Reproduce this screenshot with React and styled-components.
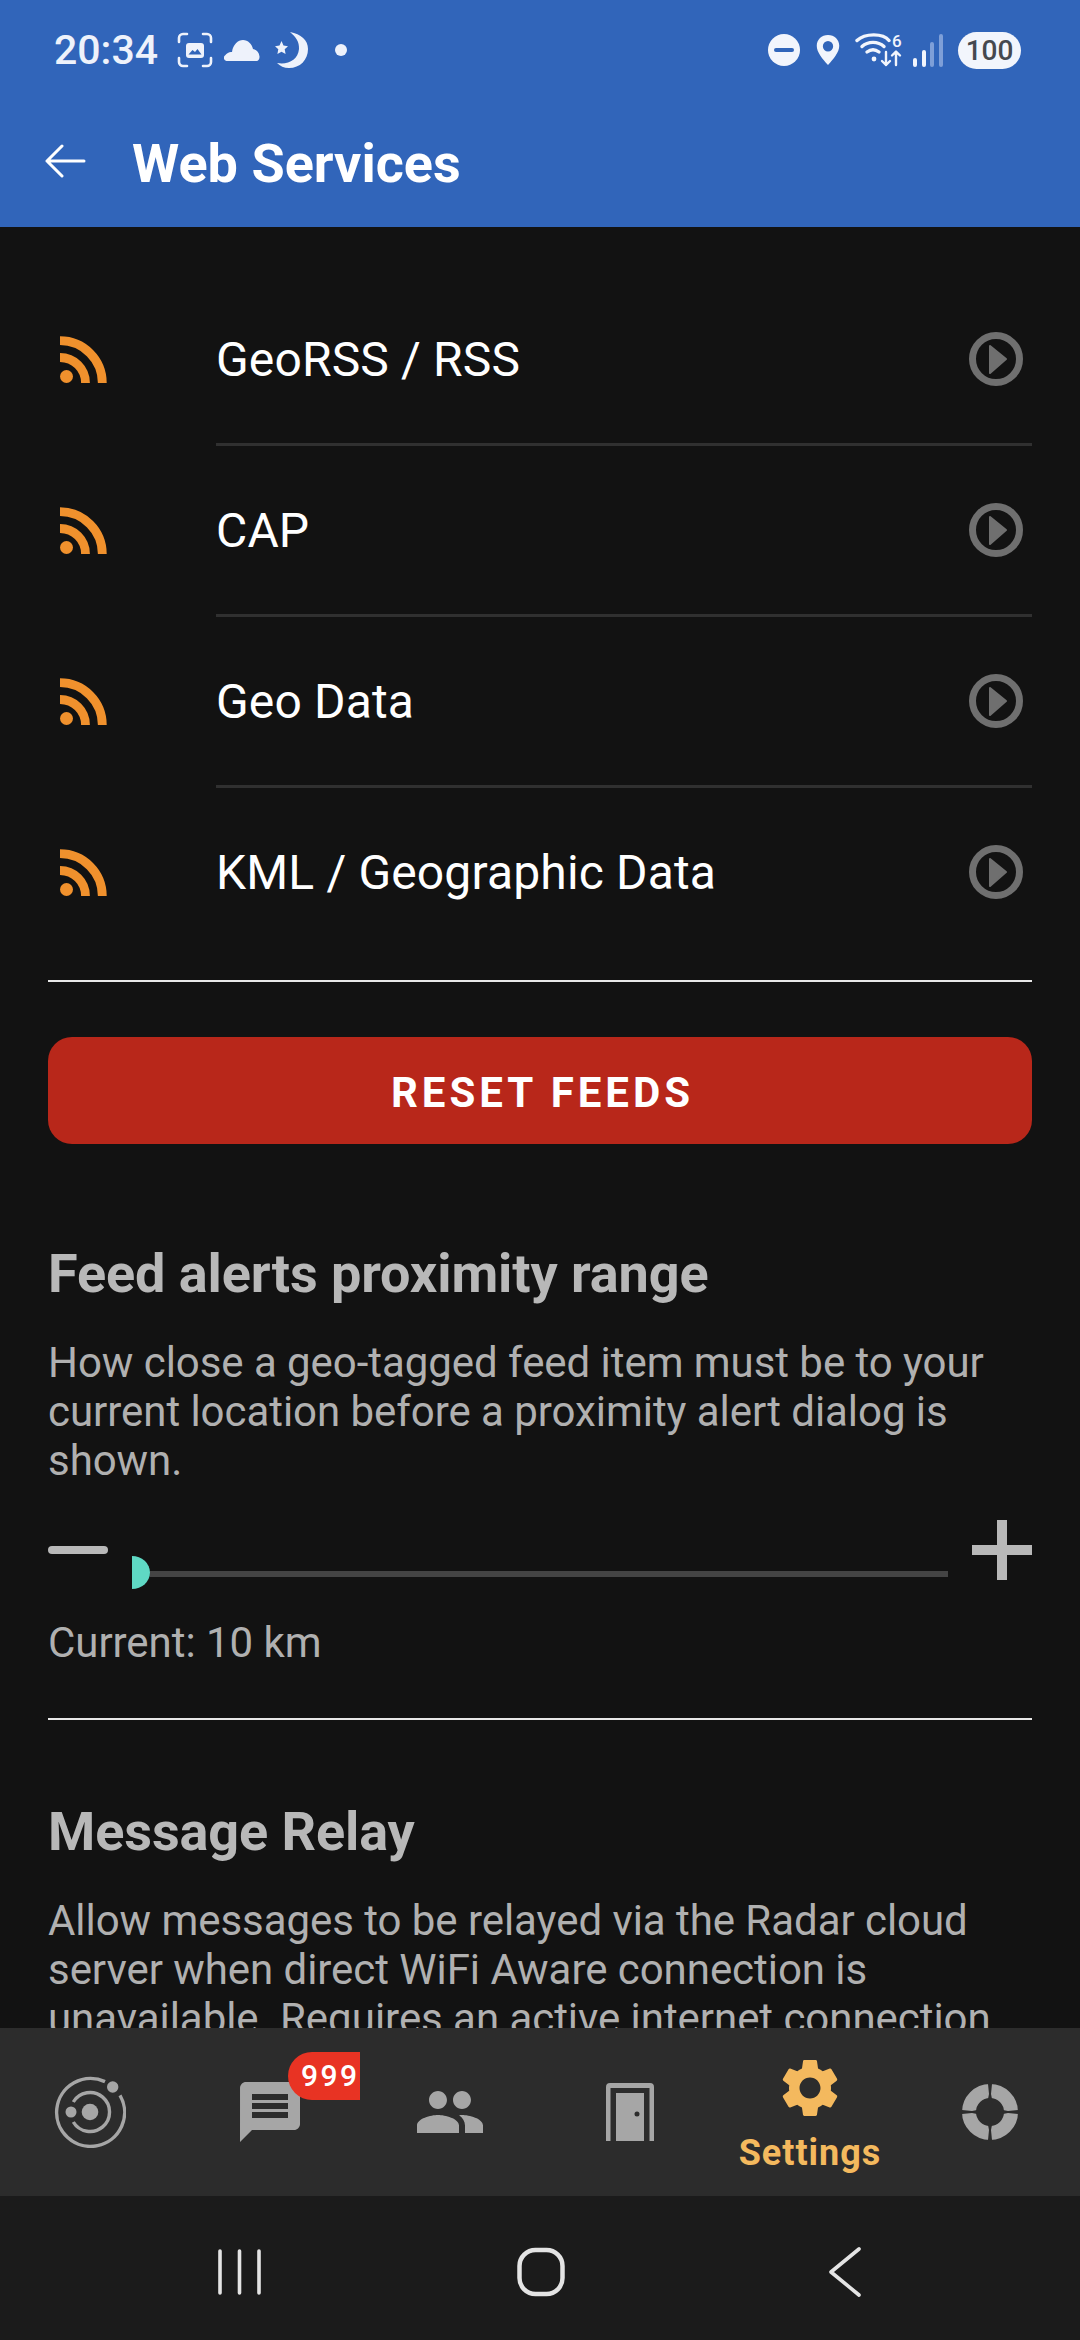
import React from 'react'
import styled, { createGlobalStyle } from 'styled-components'
import { MdMessage, MdPeople, MdSettings } from 'react-icons/md'

const GlobalStyle = createGlobalStyle`
    html, body {
        margin: 0;
        padding: 0;
        background: #121212;
    }
    * {
        box-sizing: border-box;
    }
`

const Screen = styled.div`
    width: 1080px;
    height: 2340px;
    display: flex;
    flex-direction: column;
    overflow: hidden;
    background: #121212;
    font-family: Roboto, "Liberation Sans", sans-serif;
`

const Header = styled.header`
    height: 227px;
    flex: none;
    background: #3165ba;
    display: flex;
    flex-direction: column;
`

const StatusBar = styled.div`
    height: 100px;
    padding: 0 59px 0 54px;
    display: flex;
    align-items: center;
    justify-content: space-between;
    color: #eef2fb;
`

const StatusLeft = styled.div`
    display: flex;
    align-items: center;
`

const StatusRight = styled.div`
    display: flex;
    align-items: center;
`

const Time = styled.span`
    font-size: 41px;
    font-weight: 500;
    width: 123px;
`

const AppBar = styled.div`
    flex: 1;
    display: flex;
    align-items: center;
    padding-left: 45px;
`

const BackButton = styled.div`
    display: flex;
    margin-bottom: 5px;
`

const Title = styled.h1`
    margin: 0 0 0 46px;
    font-size: 54px;
    font-weight: 700;
    color: #fff;
`

const Battery = styled.span`
    width: 63px;
    height: 37px;
    margin-left: 15px;
    border-radius: 19px;
    background: #f2f5fc;
    color: #45484f;
    font-size: 28px;
    font-weight: 500;
    display: flex;
    align-items: center;
    justify-content: center;
`

const Content = styled.main`
    flex: 1;
    min-height: 0;
    overflow: hidden;
    padding: 48px 48px 0;
`

const Row = styled.div`
    height: 171px;
    display: flex;
    align-items: center;
`

const RowIcon = styled.div`
    width: 168px;
    padding-left: 12px;
    margin-bottom: 2px;
    display: flex;
`

const RowBody = styled.div`
    flex: 1;
    height: 100%;
    display: flex;
    align-items: center;
    justify-content: space-between;
    padding-right: 9px;
    border-bottom: 3px solid ${p => (p.$last ? 'transparent' : '#303030')};
`

const RowLabel = styled.span`
    font-size: 48px;
    letter-spacing: 0.15px;
    color: #fff;
`

const Rule = styled.hr`
    margin: ${p => p.$margin};
    border: 0;
    height: 2px;
    background: #e8e8e8;
`

const ResetButton = styled.button`
    display: block;
    width: 100%;
    height: 107px;
    padding: 3px 0 0 5px;
    border: 0;
    border-radius: 24px;
    background: #b8271a;
    color: #fff;
    font-family: inherit;
    font-size: 42px;
    font-weight: 700;
    letter-spacing: 4px;
`

const SectionTitle = styled.h2`
    margin: ${p => p.$margin};
    font-size: 54px;
    line-height: 60px;
    font-weight: 700;
    letter-spacing: -0.1px;
    color: #b8b8b8;
`

const Description = styled.p`
    margin: 34px 0 0;
    font-size: 42px;
    line-height: 49px;
    letter-spacing: -0.05px;
    color: #b0b0b0;
`

const Stepper = styled.div`
    height: 60px;
    margin-top: 35px;
    display: flex;
    align-items: center;
`

const Minus = styled.div`
    width: 60px;
    height: 8px;
    border-radius: 4px;
    background: #b8b8b8;
`

const Slider = styled.div`
    flex: 1;
    margin: 45px 24px 0;
    display: flex;
    align-items: center;
`

const Thumb = styled.div`
    width: 18px;
    height: 33px;
    border-radius: 0 18px 18px 0 / 0 16.5px 16.5px 0;
    background: #5fd9c4;
`

const Track = styled.div`
    flex: 1;
    height: 6px;
    margin-top: 2px;
    background: #444;
`

const Plus = styled.div`
    width: 60px;
    height: 60px;
    background:
        linear-gradient(#b8b8b8, #b8b8b8) center / 60px 10px no-repeat,
        linear-gradient(#b8b8b8, #b8b8b8) center / 10px 60px no-repeat;
`

const Current = styled.div`
    margin-top: 38px;
    font-size: 42px;
    line-height: 49px;
    letter-spacing: -0.05px;
    color: #b0b0b0;
`

const BottomNav = styled.nav`
    height: 168px;
    flex: none;
    background: #2c2c2c;
    display: grid;
    grid-template-columns: repeat(6, 1fr);
`

const Tab = styled.div`
    display: flex;
    flex-direction: column;
    align-items: center;
    justify-content: ${p => (p.$active ? 'flex-start' : 'center')};
    padding-top: ${p => (p.$active ? '25px' : '0')};
    color: ${p => (p.$active ? '#f4b95e' : '#a6a6a6')};
`

const TabLabel = styled.span`
    margin-top: 9px;
    font-size: 36px;
    line-height: 42px;
    font-weight: 700;
    letter-spacing: 1px;
`

const IconHolder = styled.div`
    position: relative;
    display: flex;
`

const Badge = styled.span`
    position: absolute;
    left: 54px;
    top: -24px;
    width: 72px;
    height: 48px;
    padding-left: 13px;
    border-radius: 24px 0 0 24px;
    background: #e83323;
    color: #fff;
    font-size: 30px;
    line-height: 48px;
    font-weight: 500;
    letter-spacing: 2.4px;
`

const SystemNav = styled.div`
    height: 144px;
    flex: none;
    background: #1b1b1b;
    display: grid;
    grid-template-columns: 301px 311px 34px;
    align-items: center;
    padding: 8px 0 0 216px;
`

function RssIcon() {
    return (
        <svg width="48" height="48" viewBox="0 0 48 48" fill="none" stroke="#f0912d" strokeWidth="8.8">
            <circle cx="6.5" cy="40.5" r="6.5" fill="#f0912d" stroke="none" />
            <path d="M0 21.500A25.500 25.500 0 0 1 25.500 47" />
            <path d="M0 4.700A42.300 42.300 0 0 1 42.300 47" />
        </svg>
    )
}

function PlayIcon() {
    return (
        <svg width="54" height="54" viewBox="0 0 54 54">
            <circle cx="27" cy="27" r="23.500" fill="none" stroke="#6f6f6f" strokeWidth="7" />
            <path d="M21 14 37 27 21 41Z" fill="#6f6f6f" stroke="#6f6f6f" strokeWidth="2" strokeLinejoin="round" />
        </svg>
    )
}

function BackArrow() {
    return (
        <svg width="41" height="34" viewBox="0 0 41 34" fill="none" stroke="#fff" strokeWidth="3" strokeLinecap="round" strokeLinejoin="round">
            <path d="M39 17H2M17 2 2 17l15 15" />
        </svg>
    )
}

function ScreenshotIcon() {
    return (
        <svg width="36" height="36" viewBox="0 0 36 36" fill="none" stroke="#eef2fb" strokeWidth="2.600" strokeLinecap="round">
            <path d="M10 2H6a4 4 0 0 0-4 4v4M26 2h4a4 4 0 0 1 4 4v4M10 34H6a4 4 0 0 1-4-4v-4M26 34h4a4 4 0 0 0 4-4v-4" />
            <rect x="9" y="11" width="18" height="15" rx="3" fill="#eef2fb" stroke="none" />
            <path d="M11.500 22.500l4-4.500 2.500 2 2.500-3 4 5.500Z" fill="#3165ba" stroke="none" />
        </svg>
    )
}

function CloudIcon() {
    return (
        <svg width="36" height="21" viewBox="0 0 36 21" fill="#eef2fb" style={{ marginLeft: 11 }}>
            <path d="M3 21a3 3 0 0 1-2-5.400C3 12.500 6 11.500 8 12 9 4.500 14 0 19 0c5 0 9 4 10 9 3.500.500 6 3 6.500 7.500.2 2.500-1 4.500-3 4.500Z" />
        </svg>
    )
}

function MoonIcon() {
    return (
        <svg width="36" height="36" viewBox="0 0 36 36" fill="#eef2fb" style={{ marginLeft: 12 }}>
            <path d="M18 0c11 2 18 8 18 17 0 11-8 19-19 19-5 0-9-2-12-5 11 2 21-3 22-14 .4-7-3-12-9-17Z" />
            <path d="M9.500 9l2 4.500 4.500.7-3.300 3 .9 4.800-4.100-2.300-4.100 2.300.9-4.800L3 14.200l4.500-.7Z" />
        </svg>
    )
}

function Dot() {
    return (
        <svg width="12" height="12" viewBox="0 0 12 12" fill="#eef2fb" style={{ marginLeft: 27 }}>
            <circle cx="6" cy="6" r="6" />
        </svg>
    )
}

function DndIcon() {
    return (
        <svg width="32" height="32" viewBox="0 0 32 32">
            <circle cx="16" cy="16" r="16" fill="#f2f5fc" />
            <rect x="6" y="14" width="20" height="4" rx="2" fill="#3165ba" />
        </svg>
    )
}

function PinIcon() {
    return (
        <svg width="24" height="30" viewBox="0 0 24 32" style={{ marginLeft: 16 }}>
            <path fillRule="evenodd" fill="#f2f5fc" d="M12 0c6.800 0 12 5 12 11.500 0 7-6 14-12 20.500C6 25.500 0 18.500 0 11.500 0 5 5.200 0 12 0Zm0 6.500a5.500 5.500 0 1 0 0 11 5.500 5.500 0 0 0 0-11Z" />
        </svg>
    )
}

function WifiIcon() {
    return (
        <svg width="47" height="34" viewBox="0 0 47 34" fill="none" stroke="#f2f5fc" strokeWidth="3.400" strokeLinecap="round" strokeLinejoin="round" style={{ marginLeft: 15 }}>
            <path d="M2 7.500c8-7.500 26-7.500 32 0" />
            <path d="M7 13.500c6-5.500 16-5.500 22 0" />
            <path d="M12 19c4-3 8-3 12 0" />
            <circle cx="19" cy="26" r="2.400" fill="#f2f5fc" stroke="none" />
            <path d="M31 19v13M27 28l4 4 4-4M41 32V19M37 22.500l4-4 4 4" strokeWidth="2.400" />
            <text x="37" y="13.500" fontSize="17" fontWeight="500" fill="#f2f5fc" stroke="none" fontFamily="Roboto">6</text>
        </svg>
    )
}

function SignalIcon() {
    return (
        <svg width="30" height="33" viewBox="0 0 30 33" style={{ marginLeft: 11 }}>
            <rect x="0" y="24" width="4" height="9" rx="2" fill="#f2f5fc" />
            <rect x="9" y="16" width="4" height="17" rx="2" fill="#f2f5fc" />
            <rect x="17" y="8" width="4" height="25" rx="2" fill="#7e9fd8" />
            <rect x="26" y="0" width="4" height="33" rx="2" fill="#7e9fd8" />
        </svg>
    )
}

function RadarIcon() {
    return (
        <svg width="72" height="72" viewBox="0 0 72 72" fill="none" stroke="currentColor" strokeWidth="3.400">
            <path d="M66 19.300A34 34 0 1 1 51 5.600" />
            <path d="M19.300 26A19.500 19.500 0 1 1 19.300 46" />
            <circle cx="36" cy="36" r="8.300" fill="currentColor" stroke="none" />
            <circle cx="17" cy="36" r="5.500" fill="currentColor" stroke="none" />
            <circle cx="58.700" cy="11" r="5.700" fill="currentColor" stroke="none" />
        </svg>
    )
}

function DoorIcon() {
    return (
        <svg width="48" height="58" viewBox="0 0 48 58">
            <path fill="currentColor" d="M0 58V4a4 4 0 0 1 4-4h40a4 4 0 0 1 4 4v54h-4.500V5H4.500v53Z" />
            <path fill="currentColor" fillRule="evenodd" d="M10 10h28v48H10Zm21 18.500a2.500 2.500 0 1 0 0 5 2.500 2.500 0 0 0 0-5Z" />
        </svg>
    )
}

function LifebuoyIcon() {
    return (
        <svg width="56" height="56" viewBox="0 0 56 56">
            <circle cx="28" cy="28" r="21" fill="none" stroke="currentColor" strokeWidth="14" />
            <path d="M26 0h4l-1 10 1 5h-4l1-5ZM26 56h4l-1-10 1-5h-4l1 5ZM0 26v4l10-1 5 1v-4l-5 1ZM56 26v4l-10-1-5 1v-4l5 1Z" fill="#2c2c2c" />
        </svg>
    )
}

function RecentsIcon() {
    return (
        <svg width="46" height="48" viewBox="0 0 46 48" fill="none" stroke="#e4e4e4" strokeWidth="3.600" strokeLinecap="round">
            <path d="M4 3v42M23.500 3v42M43 3v42" />
        </svg>
    )
}

function HomeIcon() {
    return (
        <svg width="48" height="50" viewBox="0 0 48 50" fill="none" stroke="#e4e4e4" strokeWidth="4.500">
            <rect x="2.500" y="3" width="43" height="44" rx="16" />
        </svg>
    )
}

function SystemBackIcon() {
    return (
        <svg width="34" height="50" viewBox="0 0 34 50" fill="none" stroke="#e4e4e4" strokeWidth="3.600" strokeLinecap="round" strokeLinejoin="round">
            <path d="M31 2 3 25l28 23" />
        </svg>
    )
}

const feeds = ['GeoRSS / RSS', 'CAP', 'Geo Data', 'KML / Geographic Data']

export default function App() {
    return (
        <Screen>
            <GlobalStyle />
            <Header>
                <StatusBar>
                    <StatusLeft>
                        <Time>20:34</Time>
                        <ScreenshotIcon />
                        <CloudIcon />
                        <MoonIcon />
                        <Dot />
                    </StatusLeft>
                    <StatusRight>
                        <DndIcon />
                        <PinIcon />
                        <WifiIcon />
                        <SignalIcon />
                        <Battery>100</Battery>
                    </StatusRight>
                </StatusBar>
                <AppBar>
                    <BackButton><BackArrow /></BackButton>
                    <Title>Web Services</Title>
                </AppBar>
            </Header>
            <Content>
                {feeds.map((feed, i) => (
                    <Row key={feed}>
                        <RowIcon><RssIcon /></RowIcon>
                        <RowBody $last={i === feeds.length - 1}>
                            <RowLabel>{feed}</RowLabel>
                            <PlayIcon />
                        </RowBody>
                    </Row>
                ))}
                <Rule $margin="21px 0 55px" />
                <ResetButton>RESET FEEDS</ResetButton>
                <SectionTitle $margin="100px 0 0">Feed alerts proximity range</SectionTitle>
                <Description>How close a geo-tagged feed item must be to your current location before a proximity alert dialog is shown.</Description>
                <Stepper>
                    <Minus />
                    <Slider>
                        <Thumb />
                        <Track />
                    </Slider>
                    <Plus />
                </Stepper>
                <Current>Current: 10 km</Current>
                <Rule $margin="51px 0 0" />
                <SectionTitle $margin="82px 0 0">Message Relay</SectionTitle>
                <Description>Allow messages to be relayed via the Radar cloud server when direct WiFi Aware connection is unavailable. Requires an active internet connection.</Description>
            </Content>
            <BottomNav>
                <Tab><RadarIcon /></Tab>
                <Tab>
                    <IconHolder>
                        <MdMessage size={72} />
                        <Badge>999</Badge>
                    </IconHolder>
                </Tab>
                <Tab><MdPeople size={72} /></Tab>
                <Tab><DoorIcon /></Tab>
                <Tab $active>
                    <MdSettings size={70} />
                    <TabLabel>Settings</TabLabel>
                </Tab>
                <Tab><LifebuoyIcon /></Tab>
            </BottomNav>
            <SystemNav>
                <RecentsIcon />
                <HomeIcon />
                <SystemBackIcon />
            </SystemNav>
        </Screen>
    )
}
